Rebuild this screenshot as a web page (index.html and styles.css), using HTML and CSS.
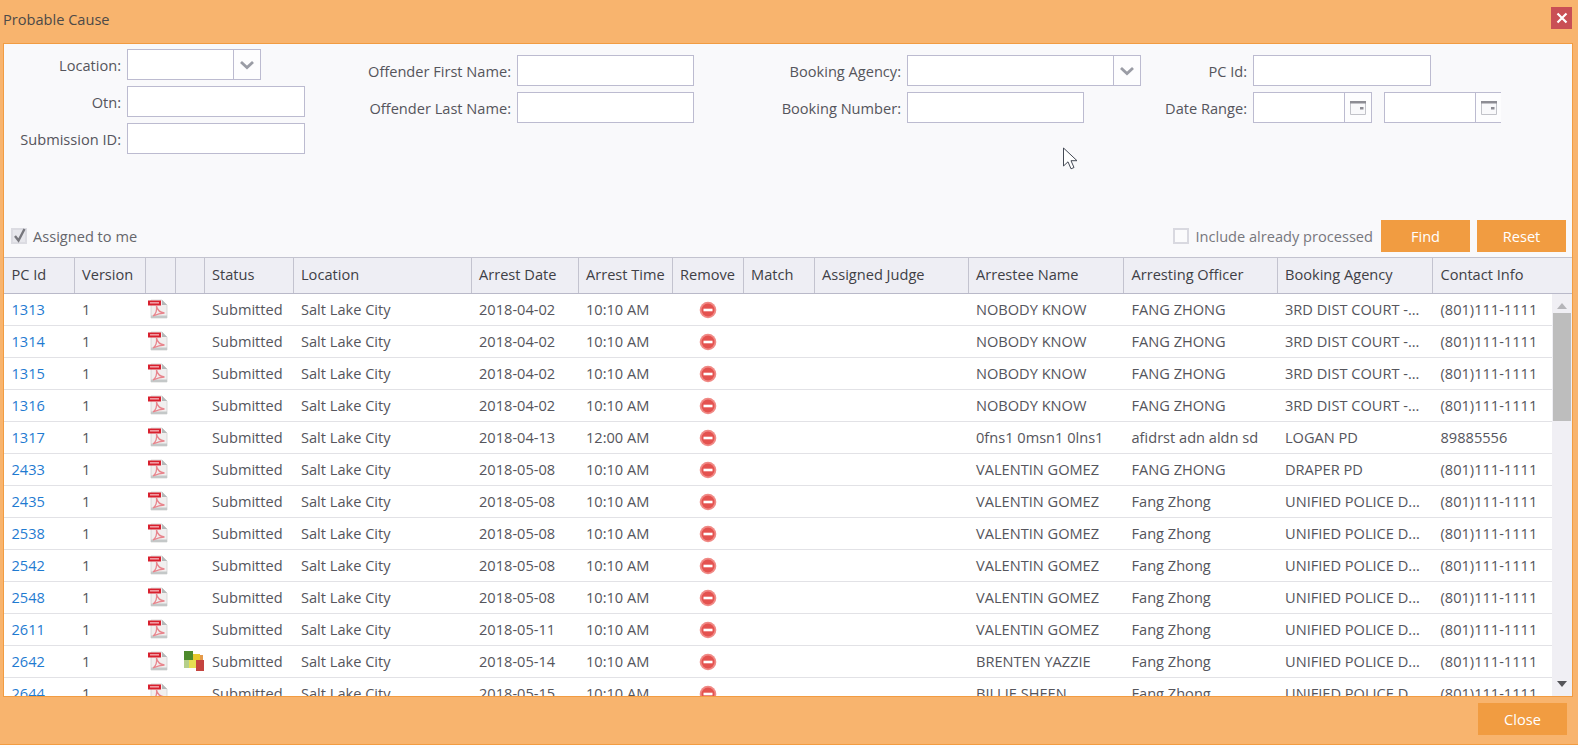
FILE: index.html
```html
<!DOCTYPE html>
<html lang="en">
<head>
<meta charset="utf-8">
<title>Probable Cause</title>
<link rel="stylesheet" href="styles.css">
</head>
<body>
<svg class="defs" width="0" height="0" aria-hidden="true">
  <defs>
    <symbol id="pdf" viewBox="0 0 20 20">
      <path d="M3 1h11l5 5v13H3z" fill="#f1efef" stroke="#d2d2d2" stroke-width=".8"/>
      <path d="M14 1v5h5z" fill="#b4b8b8"/>
      <path d="M3 16.500h16V19H3z" fill="#c4c8c8"/>
      <path d="M0 1.500h13v5H0z" fill="#d8202e"/>
      <path d="M2 3h9v1.600H2z" fill="#f09aa1"/>
      <path d="M5 17c3-2 4-6 3.500-10 .8 4 3 6.500 8 7-4 .2-7 1-11.500 3z" fill="none" stroke="#e8858d" stroke-width="1.300"/>
    </symbol>
    <symbol id="remove" viewBox="0 0 18 18">
      <circle cx="9" cy="9" r="8.300" fill="#f08a86"/>
      <circle cx="9" cy="9" r="6.500" fill="#e4524f"/>
      <rect x="4.500" y="7.700" width="9" height="2.600" fill="#fff"/>
    </symbol>
    <symbol id="chev" viewBox="0 0 16 10">
      <path d="M2 2l6 5.500L14 2" fill="none" stroke="#9a9ca5" stroke-width="2.800"/>
    </symbol>
    <symbol id="cal" viewBox="0 0 16 14">
      <path d="M.5.500h15v13H.500z" fill="#f9f9fb" stroke="#c2c3c9"/>
      <path d="M0 0h16v2.500H0z" fill="#8d8d94"/>
      <path d="M10 6h3.500v2.500H10z" fill="#8d8d94"/>
    </symbol>
  </defs>
</svg>
<div class="dialog">
  <header class="titlebar">
    <span class="title">Probable Cause</span>
    <button class="close-x" type="button" aria-label="Close">
      <svg viewBox="0 0 12 12" width="12" height="12"><path d="M1.500 1.500l9 9M10.500 1.500l-9 9" stroke="#fff" stroke-width="2.200"/></svg>
    </button>
  </header>
  <main class="panel">
    <section class="search">
      <div class="filters">
        <div class="group g1">
          <label>Location:</label>
          <div class="field combo w133"><span class="box"></span><span class="side"><svg class="chev"><use href="#chev"/></svg></span></div>
          <label>Otn:</label>
          <div class="field w178"></div>
          <label>Submission ID:</label>
          <div class="field w178"></div>
        </div>
        <div class="group g2">
          <label>Offender First Name:</label>
          <div class="field w177"></div>
          <label>Offender Last Name:</label>
          <div class="field w177"></div>
        </div>
        <div class="group g3">
          <label>Booking Agency:</label>
          <div class="field combo w234"><span class="box"></span><span class="side"><svg class="chev"><use href="#chev"/></svg></span></div>
          <label>Booking Number:</label>
          <div class="field w177"></div>
        </div>
        <div class="group g4">
          <label>PC Id:</label>
          <div class="field w178"></div>
          <label>Date Range:</label>
          <div class="dates">
            <div class="field date"><span class="box"></span><span class="side"><svg class="cal"><use href="#cal"/></svg></span></div>
            <div class="field date open"><span class="box"></span><span class="side"><svg class="cal"><use href="#cal"/></svg></span></div>
          </div>
        </div>
      </div>
      <div class="toolbar">
        <label class="check checked"><span class="tick"><svg viewBox="0 0 16 16" width="16" height="16"><path d="M3 8l3.500 4.500L12.500 1" fill="none" stroke="#77777d" stroke-width="2.400"/></svg></span>Assigned to me</label>
        <div class="actions">
          <label class="check off"><span class="tick"></span>Include already processed</label>
          <button class="btn" type="button">Find</button>
          <button class="btn" type="button">Reset</button>
        </div>
      </div>
    </section>
    <section class="grid">
      <div class="row head">
        <div>PC Id</div><div>Version</div><div></div><div></div><div>Status</div><div>Location</div><div>Arrest Date</div><div>Arrest Time</div><div>Remove</div><div>Match</div><div>Assigned Judge</div><div>Arrestee Name</div><div>Arresting Officer</div><div>Booking Agency</div><div>Contact Info</div>
      </div>
      <div class="body">
        <div class="rows">
          <div class="row"><div><a href="#">1313</a></div><div>1</div><div><svg class="pdf"><use href="#pdf"/></svg></div><div></div><div>Submitted</div><div>Salt Lake City</div><div>2018-04-02</div><div>10:10 AM</div><div class="c"><svg class="rm"><use href="#remove"/></svg></div><div></div><div></div><div>NOBODY KNOW</div><div>FANG ZHONG</div><div>3RD DIST COURT -...</div><div>(801)111-1111</div></div>
          <div class="row"><div><a href="#">1314</a></div><div>1</div><div><svg class="pdf"><use href="#pdf"/></svg></div><div></div><div>Submitted</div><div>Salt Lake City</div><div>2018-04-02</div><div>10:10 AM</div><div class="c"><svg class="rm"><use href="#remove"/></svg></div><div></div><div></div><div>NOBODY KNOW</div><div>FANG ZHONG</div><div>3RD DIST COURT -...</div><div>(801)111-1111</div></div>
          <div class="row"><div><a href="#">1315</a></div><div>1</div><div><svg class="pdf"><use href="#pdf"/></svg></div><div></div><div>Submitted</div><div>Salt Lake City</div><div>2018-04-02</div><div>10:10 AM</div><div class="c"><svg class="rm"><use href="#remove"/></svg></div><div></div><div></div><div>NOBODY KNOW</div><div>FANG ZHONG</div><div>3RD DIST COURT -...</div><div>(801)111-1111</div></div>
          <div class="row"><div><a href="#">1316</a></div><div>1</div><div><svg class="pdf"><use href="#pdf"/></svg></div><div></div><div>Submitted</div><div>Salt Lake City</div><div>2018-04-02</div><div>10:10 AM</div><div class="c"><svg class="rm"><use href="#remove"/></svg></div><div></div><div></div><div>NOBODY KNOW</div><div>FANG ZHONG</div><div>3RD DIST COURT -...</div><div>(801)111-1111</div></div>
          <div class="row"><div><a href="#">1317</a></div><div>1</div><div><svg class="pdf"><use href="#pdf"/></svg></div><div></div><div>Submitted</div><div>Salt Lake City</div><div>2018-04-13</div><div>12:00 AM</div><div class="c"><svg class="rm"><use href="#remove"/></svg></div><div></div><div></div><div>0fns1 0msn1 0lns1</div><div>afidrst adn aldn sd</div><div>LOGAN PD</div><div>89885556</div></div>
          <div class="row"><div><a href="#">2433</a></div><div>1</div><div><svg class="pdf"><use href="#pdf"/></svg></div><div></div><div>Submitted</div><div>Salt Lake City</div><div>2018-05-08</div><div>10:10 AM</div><div class="c"><svg class="rm"><use href="#remove"/></svg></div><div></div><div></div><div>VALENTIN GOMEZ</div><div>FANG ZHONG</div><div>DRAPER PD</div><div>(801)111-1111</div></div>
          <div class="row"><div><a href="#">2435</a></div><div>1</div><div><svg class="pdf"><use href="#pdf"/></svg></div><div></div><div>Submitted</div><div>Salt Lake City</div><div>2018-05-08</div><div>10:10 AM</div><div class="c"><svg class="rm"><use href="#remove"/></svg></div><div></div><div></div><div>VALENTIN GOMEZ</div><div>Fang Zhong</div><div>UNIFIED POLICE D...</div><div>(801)111-1111</div></div>
          <div class="row"><div><a href="#">2538</a></div><div>1</div><div><svg class="pdf"><use href="#pdf"/></svg></div><div></div><div>Submitted</div><div>Salt Lake City</div><div>2018-05-08</div><div>10:10 AM</div><div class="c"><svg class="rm"><use href="#remove"/></svg></div><div></div><div></div><div>VALENTIN GOMEZ</div><div>Fang Zhong</div><div>UNIFIED POLICE D...</div><div>(801)111-1111</div></div>
          <div class="row"><div><a href="#">2542</a></div><div>1</div><div><svg class="pdf"><use href="#pdf"/></svg></div><div></div><div>Submitted</div><div>Salt Lake City</div><div>2018-05-08</div><div>10:10 AM</div><div class="c"><svg class="rm"><use href="#remove"/></svg></div><div></div><div></div><div>VALENTIN GOMEZ</div><div>Fang Zhong</div><div>UNIFIED POLICE D...</div><div>(801)111-1111</div></div>
          <div class="row"><div><a href="#">2548</a></div><div>1</div><div><svg class="pdf"><use href="#pdf"/></svg></div><div></div><div>Submitted</div><div>Salt Lake City</div><div>2018-05-08</div><div>10:10 AM</div><div class="c"><svg class="rm"><use href="#remove"/></svg></div><div></div><div></div><div>VALENTIN GOMEZ</div><div>Fang Zhong</div><div>UNIFIED POLICE D...</div><div>(801)111-1111</div></div>
          <div class="row"><div><a href="#">2611</a></div><div>1</div><div><svg class="pdf"><use href="#pdf"/></svg></div><div></div><div>Submitted</div><div>Salt Lake City</div><div>2018-05-11</div><div>10:10 AM</div><div class="c"><svg class="rm"><use href="#remove"/></svg></div><div></div><div></div><div>VALENTIN GOMEZ</div><div>Fang Zhong</div><div>UNIFIED POLICE D...</div><div>(801)111-1111</div></div>
          <div class="row"><div><a href="#">2642</a></div><div>1</div><div><svg class="pdf"><use href="#pdf"/></svg></div><div class="ic"><svg class="heat" viewBox="0 0 20 20"><path d="M0 0h9v9H0z" fill="#4d8a2c"/><path d="M0 9h5v8H0z" fill="#b5cf8a"/><path d="M9 3h7v6H9z" fill="#e6c92d"/><path d="M5 9h7v8H5z" fill="#e7df52"/><path d="M12 9h8v11h-8z" fill="#c5443f"/><path d="M16 4h3v5h-3z" fill="#e59a4a"/></svg></div><div>Submitted</div><div>Salt Lake City</div><div>2018-05-14</div><div>10:10 AM</div><div class="c"><svg class="rm"><use href="#remove"/></svg></div><div></div><div></div><div>BRENTEN YAZZIE</div><div>Fang Zhong</div><div>UNIFIED POLICE D...</div><div>(801)111-1111</div></div>
          <div class="row"><div><a href="#">2644</a></div><div>1</div><div><svg class="pdf"><use href="#pdf"/></svg></div><div></div><div>Submitted</div><div>Salt Lake City</div><div>2018-05-15</div><div>10:10 AM</div><div class="c"><svg class="rm"><use href="#remove"/></svg></div><div></div><div></div><div>BILLIE SHEEN</div><div>Fang Zhong</div><div>UNIFIED POLICE D...</div><div>(801)111-1111</div></div>
        </div>
        <div class="scrollbar">
          <span class="arrow up"></span>
          <span class="thumb"></span>
          <span class="arrow down"></span>
        </div>
      </div>
    </section>
  </main>
  <footer class="footer">
    <button class="btn" type="button">Close</button>
  </footer>
</div>
<svg class="cursor" viewBox="0 0 17 24" width="17" height="24" aria-hidden="true"><path d="M1.500 1v18l4.500-4.200 3 7 3-1.300-3-6.800h6z" fill="#fff" stroke="#444a55" stroke-width="1"/></svg>
</body>
</html>
```
FILE: styles.css
```css
* { box-sizing: border-box; }
html, body { margin: 0; height: 100%; }
body {
  background: #fdfdfd;
  font-family: "Open Sans", "Noto Sans", sans-serif;
  font-size: 14.600px;
  color: #55555c;
  overflow: hidden;
  position: relative;
}
.defs { position: absolute; }
.dialog {
  height: 745px;
  background: #f8b46e;
  border-bottom: 1px solid #f29c42;
  display: flex;
  flex-direction: column;
}
.titlebar {
  height: 43px;
  flex: none;
  display: flex;
  align-items: flex-start;
  justify-content: space-between;
  padding: 7px 6px 0 3px;
}
.title { line-height: 24px; color: #4d4a48; }
.close-x {
  width: 21px;
  height: 22px;
  padding: 0;
  border: 0;
  background: #c94f55;
  display: flex;
  align-items: center;
  justify-content: center;
}
.panel {
  height: 654px;
  flex: none;
  margin: 0 5px 0 3px;
  border: 1px solid #f29c42;
  background: #f9f9fb;
  display: flex;
  flex-direction: column;
}
.search {
  height: 213px;
  flex: none;
  display: flex;
  flex-direction: column;
  justify-content: space-between;
}
.filters { display: flex; align-items: flex-start; }
.group {
  display: grid;
  row-gap: 6px;
  column-gap: 6px;
  align-items: center;
  justify-items: start;
}
.group label { justify-self: end; white-space: nowrap; }
.g1 { grid-template-columns: 117px auto; width: 300px; padding-top: 5px; }
.g2 { grid-template-columns: 207px auto; width: 390px; padding-top: 11px; }
.g3 { grid-template-columns: 207px auto; width: 458px; padding-top: 11px; }
.g4 { grid-template-columns: 95px auto; padding-top: 11px; }
.field {
  height: 31px;
  border: 1px solid #bcbbd0;
  background: #fff;
  display: flex;
}
.w133 { width: 134px; }
.w177 { width: 177px; }
.w178 { width: 178px; }
.w234 { width: 234px; }
.box { flex: 1; }
.side {
  width: 27px;
  border-left: 1px solid #bcbbd0;
  background: #fdfdfe;
  display: flex;
  align-items: center;
  justify-content: center;
}
.chev { width: 16px; height: 10px; }
.cal { width: 16px; height: 14px; }
.dates { display: flex; gap: 12px; }
.date { width: 119px; }
.date.open { width: 117px; border-right: 0; }
.date.open .side { width: 26px; }
.toolbar {
  display: flex;
  align-items: center;
  justify-content: space-between;
  padding: 0 6px 5px 7px;
}
.check { display: flex; align-items: center; gap: 6px; color: #66666c; }
.tick {
  width: 16px;
  height: 16px;
  border: 2px solid #d9d9e0;
  background: #fbfbfc;
  display: block;
  position: relative;
}
.checked .tick { background: #e7e7ec; border-color: #dcdce2; }
.tick svg { position: absolute; left: -1px; top: -2px; }
.off { color: #77777d; }
.actions { display: flex; align-items: center; }
.actions .btn { margin-left: 8px; }
.actions .btn:last-child { margin-left: 7px; }
.btn {
  width: 89px;
  height: 32px;
  border: 0;
  padding: 0;
  background: #f19c41;
  color: #fff;
  font: inherit;
}
.grid { flex: 1; min-height: 0; display: flex; flex-direction: column; background: #fff; }
.row {
  display: grid;
  grid-template-columns: 70.500px 71px 30px 29px 89px 178px 107px 94px 71px 71px 154px 155.500px 153.500px 155.500px 1fr;
  align-items: center;
}
.row > div { padding-left: 7.500px; white-space: nowrap; overflow: hidden; }
.head {
  height: 37px;
  flex: none;
  background: #eeeef4;
  border-top: 1px solid #c3c3cf;
  border-bottom: 1px solid #b9b9c9;
  align-items: stretch;
  color: #3f3f46;
}
.head > div {
  border-right: 1px solid #c3c3cf;
  line-height: 33px;
}
.head > div:last-child { border-right: 0; }
.body { flex: 1; min-height: 0; display: flex; }
.rows { flex: 1; min-width: 0; overflow: hidden; }
.rows .row {
  height: 32px;
  padding-bottom: 2px;
  border-bottom: 1px solid #e2e2e6;
}
.rows .row > div { height: 20px; line-height: 20px; }
.rows .row > .ic { padding-left: 8px; overflow: visible; }
a { color: #1f7bd1; text-decoration: none; }
.rows .row > div:nth-child(3) { padding-left: 2px; overflow: visible; }
.pdf, .heat { width: 20px; height: 20px; display: block; filter: blur(.4px); }
.rows .row > .c { padding-left: 0; padding-top: 2px; display: flex; justify-content: center; }
.rm { width: 18px; height: 18px; display: block; filter: blur(.4px); }
.scrollbar {
  width: 20px;
  flex: none;
  background: #f0eff4;
  display: flex;
  flex-direction: column;
  align-items: center;
  position: relative;
}
.thumb {
  width: 18px;
  height: 108px;
  margin-top: 4px;
  background: #bdbdbd;
}
.arrow { width: 0; height: 0; border-left: 5px solid transparent; border-right: 5px solid transparent; }
.up { margin-top: 9px; border-bottom: 6px solid #b5b5b9; }
.down { margin-top: auto; margin-bottom: 9px; border-top: 6px solid #55555a; }
.footer {
  flex: 1;
  display: flex;
  align-items: flex-start;
  justify-content: flex-end;
  padding: 6px 11px 0 0;
}
.cursor { position: absolute; left: 1062px; top: 147px; }
```
